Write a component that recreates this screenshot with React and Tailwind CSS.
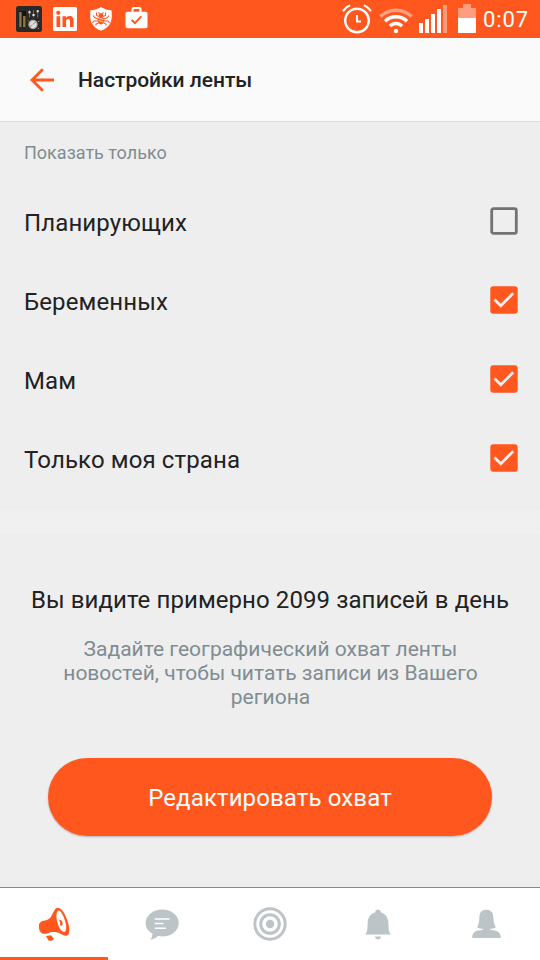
import { useState } from "react";

const FILTERS = [
  { id: "planning", label: "Планирующих", checked: false },
  { id: "pregnant", label: "Беременных", checked: true },
  { id: "moms", label: "Мам", checked: true },
  { id: "country", label: "Только моя страна", checked: true },
];

function StatusBar() {
  return (
    <div className="flex h-[38px] shrink-0 justify-between bg-[#ff571e] pl-4 pr-[11px] text-white">
      <div className="flex items-center gap-[11px]">
        {/* микшер */}
        <svg width="26" height="26" viewBox="0 0 26 26">
          <rect width="26" height="26" rx="2.5" fill="#2b2928" />
          <path d="M4.5 5v16M8.300 5v16" stroke="#141414" strokeWidth="3.400" />
          <path d="M4.400 6v15M8.300 10v11" stroke="#8f7843" strokeWidth="2.400" />
          <path d="M13.500 4v7.500M17.500 4v7.500M21.700 4v7.500" stroke="#77736a" strokeWidth="0.9" />
          <path d="M12.400 6.200h2.200M16.400 9h2.200M20.600 5.200h2.200" stroke="#e6e2da" strokeWidth="2" />
          <circle cx="17" cy="18.500" r="4.700" fill="#aaa9a5" />
          <circle cx="17" cy="18.500" r="3.400" fill="#dedddb" />
          <path d="M17 18.500l3-3M13.800 20.500l2-1" stroke="#85827d" strokeWidth="1" />
          <path d="M12 14.500l1 1M22 15.500h1.200M22 22.500h1" stroke="#a49e92" />
        </svg>
        {/* linkedin */}
        <svg width="24" height="24" viewBox="0 0 24 24">
          <rect width="24" height="24" rx="1.5" fill="#fff" />
          <g fill="#ff571e">
            <circle cx="5.3" cy="5.8" r="2.1" />
            <path d="M3.5 9.3h3.7V20H3.5zM9.5 9.3H13v1.5c.7-1.1 1.9-1.8 3.5-1.8 3.3 0 4.1 2 4.1 5V20H17v-5.3c0-1.5-.3-2.7-1.9-2.7-1.5 0-2 1.1-2 2.7V20H9.5z" />
          </g>
        </svg>
        {/* щит с пауком */}
        <svg className="ml-0.5" width="22" height="24" viewBox="0 0 22 24">
          <path d="M11 0c2.800 2 6.400 3 10.500 3.200.4 4 .8 9.200-1.300 13-1.900 3.400-5.200 6-9.200 7.500-4-1.500-7.300-4.100-9.200-7.500C-.3 12.400.1 7.200.5 3.200 4.600 3 8.200 2 11 0z" fill="#fff" />
          <g fill="#ff571e">
            <circle cx="11" cy="8.300" r="2.200" />
            <ellipse cx="11" cy="13.600" rx="3.300" ry="3.800" />
          </g>
          <path d="M9 9.500L6.500 8.500V5.500M13 9.500l2.500-1V5.500M8 12l-3.500-1.500L3 8.500M14 12l3.500-1.500L19 8.500M8 14H4l-1.500 2M14 14h4l1.500 2M8.500 16L6 17v1.500M13.500 16l2.500 1v1.500M9.500 6.500L8.500 5.500M12.500 6.500l1-1" fill="none" stroke="#ff571e" strokeWidth="1.100" />
          <path d="M8.500 11l5 1.500M8.500 13.500l5 1.500" stroke="#fff" strokeWidth="0.700" />
        </svg>
        {/* портфель с галочкой */}
        <svg className="-mt-0.5 ml-0.5" width="23" height="22" viewBox="0 0 23 22">
          <path d="M7.500 5V2.500Q7.500 1 9 1h5q1.500 0 1.500 1.500V5" fill="none" stroke="#fff" strokeWidth="2" />
          <rect x="0.500" y="4.700" width="22" height="16.500" rx="1.700" fill="#fff" />
          <path d="M6.700 13l3.200 3.100 6.400-6.700" fill="none" stroke="#ff571e" strokeWidth="2" />
        </svg>
      </div>

      <div className="flex items-center">
        {/* будильник */}
        <svg width="30" height="30" viewBox="0 0 30 30" fill="none" stroke="#fff">
          <circle cx="15" cy="16.500" r="11.800" strokeWidth="2.400" />
          <path d="M15 11v6.500h4" strokeWidth="2" />
          <path d="M1 7.300Q3.500 3 8.200 1.400M29 7.300Q26.500 3 21.800 1.400" strokeWidth="2" />
        </svg>
        {/* wi-fi */}
        <svg className="ml-[7px] mt-[3px]" width="34" height="26" viewBox="0 0 34 26" fill="none" stroke="#fff" strokeWidth="3.400">
          <path d="M1.300 8.500Q8 2.200 17 2.200T32.700 8.500" opacity="0.450" />
          <path d="M6 13.300q4.500-4.500 11-4.500t11 4.500" />
          <path d="M11 18.200q2.500-2.700 6-2.700t6 2.700" />
          <circle cx="17" cy="23" r="2.200" fill="#fff" stroke="none" />
        </svg>
        {/* сигнал */}
        <svg className="ml-1.5" width="28" height="28" viewBox="0 0 28 28" fill="#fff">
          <path d="M0 18h4v10H0zM6 14h4v14H6zM12 9h4v19h-4zM18 4h4v24h-4z" />
          <path d="M24 0h4v28h-4z" opacity="0.400" />
        </svg>
        {/* батарея */}
        <svg className="ml-[11px] -mt-px" width="18" height="29" viewBox="0 0 18 29" fill="#fff">
          <path d="M5 0h8v4h5v10H0V4h5z" opacity="0.420" />
          <path d="M0 14h18v15H0z" />
        </svg>
        <span className="ml-[7px] mt-0.5 w-[46px] whitespace-nowrap text-[22px] leading-none tracking-[0.9px]">0:07</span>
      </div>
    </div>
  );
}

function Checkbox({ checked }) {
  return (
    <svg width="28" height="28" viewBox="0 0 28 28">
      {checked ? (
        <>
          <rect x="0.300" y="0.300" width="27.400" height="27.400" rx="3" fill="#ff571e" />
          <path d="M4.500 13.500l6.300 6.200L23.200 7.200" fill="none" stroke="#efefef" strokeWidth="2.800" />
        </>
      ) : (
        <rect x="1.700" y="1.700" width="24.600" height="24.600" rx="1.800" fill="none" stroke="#737373" strokeWidth="2.800" />
      )}
    </svg>
  );
}

function BottomNav() {
  return (
    <nav className="grid h-[73px] shrink-0 grid-cols-5 border-t border-[#7f8c91] bg-white text-[#bcc4c7]">
      <button className="flex items-center justify-center border-b-[3px] border-[#ff571e] pt-[3px] text-[#ff571e]">
        {/* рупор */}
        <svg width="31" height="34" viewBox="117 81 93 102" fill="currentColor">
          <path fillRule="evenodd" d="M173 83c14 0 26 25 33 51 4 20 2 33-7 33-8 0-15-4-22-8-13-5-25-3-34 1-12 4-22 0-25-11-4-12-1-22 9-26 12-2 21-5 26-13 6-9 11-27 20-27zM175 92c-7 3-7 20-3 35 5 19 15 31 22 29 6-4 6-19 1-34-5-16-14-32-20-30z" />
          <path d="M177 120c6-3 11 5 11 12 0 5-4 7-8 4 2-5 0-11-3-16zM138 168l15-2 9 10-6 6h-10z" />
        </svg>
      </button>
      <button className="flex items-center justify-center">
        <svg width="34" height="31" viewBox="0 0 34 31" fill="currentColor">
          <path d="M17.300.5c9.200 0 16.500 6 16.500 13.500s-7.300 13.500-16.500 13.500c-1.500 0-3-.2-4.300-.5-2.300 2.200-4.700 3.500-7.700 3.700 1.500-1.800 2.200-3.600 2-6.200C3.100 22 .6 18.200.6 14 .6 6.500 8 .5 17.300.5z" />
          <path d="M9.700 10h14.800M9.700 14.500h8.800M9.700 19.300H21" stroke="#fff" strokeWidth="1.500" />
        </svg>
      </button>
      <button className="flex items-center justify-center">
        <svg width="34" height="34" viewBox="0 0 34 34" fill="none" stroke="currentColor" strokeWidth="3">
          <circle cx="17" cy="17" r="15.200" />
          <circle cx="17" cy="17" r="9.300" />
          <circle cx="17" cy="17" r="4.200" fill="currentColor" stroke="none" />
        </svg>
      </button>
      <button className="flex items-center justify-center">
        <svg width="26" height="31" viewBox="0 0 26 31" fill="currentColor">
          <path d="M13 .5c1.700 0 2.700 1 2.700 2.700 4.500 1.400 7.300 5 7.600 9.800l.3 6.500c.1 2.500.7 4 2.200 6H.2c1.500-2 2.100-3.500 2.200-6l.3-6.500c.3-4.800 3.100-8.400 7.600-9.800C10.300 1.500 11.300.5 13 .5zM10 27.500h6q-.5 3-3 3t-3-3z" />
        </svg>
      </button>
      <button className="flex items-center justify-center">
        <svg width="29" height="30" viewBox="0 0 29 30" fill="currentColor">
          <path d="M14.500.8c1.600-.1 2.800.3 3.700 1.200 2.100.5 2.900 2.500 3.100 6 .2 4.500.7 7.300 2.600 10.300-1.700 1-3.800 1.500-5.700 1.500v1c1.400.4 3 .4 4.800.8 4 .9 5.800 3.200 5.800 7.400H.2c0-4.200 1.800-6.500 5.800-7.400 1.800-.4 3.400-.4 4.800-.8v-1c-1.900 0-4-.5-5.700-1.500C7 15.300 7.200 12.500 7.400 8c.2-4.700 2.700-7.200 7.100-7.200z" />
        </svg>
      </button>
    </nav>
  );
}

function App() {
  const [filters, setFilters] = useState(FILTERS);

  const toggle = (id) => {
    setFilters(filters.map((f) => (f.id === id ? { ...f, checked: !f.checked } : f)));
  };

  return (
    <div className="flex h-[960px] w-[540px] flex-col overflow-hidden bg-[#eeeeee] font-['Roboto',sans-serif] text-[#222]">
      <StatusBar />

      <header className="flex h-[84px] shrink-0 items-center border-b border-[#dcdcdc] bg-[#fafafa] pl-[30px]">
        <svg width="24" height="24" viewBox="0 0 24 24" fill="none" stroke="#ff571e" strokeWidth="2.800">
          <path d="M24 12H2M12.800 1.200L2 12l10.800 10.800" />
        </svg>
        <h1 className="ml-6 pt-0.5 text-[21px] font-medium tracking-[-0.04px]">Настройки ленты</h1>
      </header>

      <section className="h-[388px] shrink-0">
        <h2 className="px-6 pt-[17px] text-lg leading-7 text-[#7f8c91]">Показать только</h2>
        <div className="mt-4">
          {filters.map((f) => (
            <button
              key={f.id}
              onClick={() => toggle(f.id)}
              className="flex h-[79px] w-full items-center justify-between pl-6 pr-[22px] text-left text-2xl tracking-[0.12px]"
            >
              <span>{f.label}</span>
              <span className="-mt-1">
                <Checkbox checked={f.checked} />
              </span>
            </button>
          ))}
        </div>
      </section>

      <div className="h-6 shrink-0 bg-[#f0f0f0]" />

      <section className="flex flex-1 flex-col items-center pt-[50px] text-center">
        <h2 className="whitespace-nowrap text-2xl tracking-[0.08px]">Вы видите примерно 2099 записей в день</h2>
        <p className="mt-[21px] pl-px text-[21px] leading-6 text-[#7f8c91]">
          Задайте географический охват ленты
          <br />
          новостей, чтобы читать записи из Вашего
          <br />
          региона
        </p>
        <button className="mt-[49px] h-[78px] w-[444px] rounded-full bg-[#ff571e] pt-0.5 text-2xl tracking-[0.12px] text-white shadow-[0_1px_2px_rgba(0,0,0,0.25)]">
          Редактировать охват
        </button>
      </section>

      <BottomNav />
    </div>
  );
}

export default App;
